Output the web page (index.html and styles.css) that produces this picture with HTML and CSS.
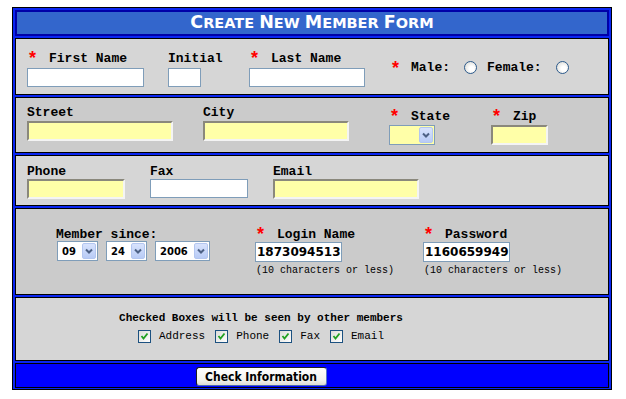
FILE: index.html
```html
<!DOCTYPE html>
<html lang="en">
<head>
  <meta charset="UTF-8">
  <title>Create New Member Form</title>
  <link rel="stylesheet" href="styles.css">
</head>
<body>
  <form class="member-form">
    <div class="title">
      <span class="cap">C</span>REATE <span class="cap">N</span>EW <span class="cap">M</span>EMBER <span class="cap">F</span>ORM
    </div>

    <!-- name -->
    <div class="row light name-row">
      <div class="field col-first">
        <label><span class="req">*</span>First Name</label>
        <input type="text" class="plain w-first">
      </div>
      <div class="field col-initial">
        <label>Initial</label>
        <input type="text" class="plain w-initial">
      </div>
      <div class="field col-last">
        <label><span class="req">*</span>Last Name</label>
        <input type="text" class="plain w-last">
      </div>
      <div class="gender">
        <span class="req">*</span><span>Male:</span>
        <span class="radio first-radio"></span>
        <span>Female:</span>
        <span class="radio"></span>
      </div>
    </div>

    <!-- address -->
    <div class="row dark address-row">
      <div class="field col-street">
        <label>Street</label>
        <input type="text" class="fill w-street">
      </div>
      <div class="field col-city">
        <label>City</label>
        <input type="text" class="fill w-street">
      </div>
      <div class="field col-state low">
        <label><span class="req">*</span>State</label>
        <span class="select yellow w-state">
          <select><option></option></select>
          <span class="arrow"><svg width="10" height="8" viewBox="0 0 10 8"><path d="M2 2.5 L5 5.5 L8 2.5" fill="none" stroke="#4d6185" stroke-width="2"/></svg></span>
        </span>
      </div>
      <div class="field low">
        <label><span class="req">*</span>Zip</label>
        <input type="text" class="fill w-zip">
      </div>
    </div>

    <!-- contact -->
    <div class="row light contact-row">
      <div class="field col-phone">
        <label>Phone</label>
        <input type="text" class="fill w-phone">
      </div>
      <div class="field col-fax">
        <label>Fax</label>
        <input type="text" class="plain w-fax">
      </div>
      <div class="field">
        <label>Email</label>
        <input type="text" class="fill w-street">
      </div>
    </div>

    <!-- login -->
    <div class="row dark login-row">
      <div class="field col-since">
        <label>Member since:</label>
        <div class="dates">
          <span class="select w-month">
            <select><option>09</option></select>
            <span class="arrow"><svg width="10" height="8" viewBox="0 0 10 8"><path d="M2 2.5 L5 5.5 L8 2.5" fill="none" stroke="#4d6185" stroke-width="2"/></svg></span>
          </span>
          <span class="select w-month">
            <select><option>24</option></select>
            <span class="arrow"><svg width="10" height="8" viewBox="0 0 10 8"><path d="M2 2.5 L5 5.5 L8 2.5" fill="none" stroke="#4d6185" stroke-width="2"/></svg></span>
          </span>
          <span class="select w-year">
            <select><option>2006</option></select>
            <span class="arrow"><svg width="10" height="8" viewBox="0 0 10 8"><path d="M2 2.5 L5 5.5 L8 2.5" fill="none" stroke="#4d6185" stroke-width="2"/></svg></span>
          </span>
        </div>
      </div>
      <div class="field col-login">
        <label><span class="req">*</span>Login Name</label>
        <input type="text" class="plain w-login" value="1873094513">
        <span class="hint">(10 characters or less)</span>
      </div>
      <div class="field">
        <label><span class="req">*</span>Password</label>
        <input type="text" class="plain w-login" value="1160659949">
        <span class="hint">(10 characters or less)</span>
      </div>
    </div>

    <!-- privacy -->
    <div class="row light share-row">
      <p class="share-title">Checked Boxes will be seen by other members</p>
      <div class="checks">
        <span class="box"><svg width="11" height="11" viewBox="0 0 11 11"><path d="M2.5 5 L4.5 7.5 L8.5 2.5" fill="none" stroke="#21a121" stroke-width="1.8"/></svg></span><span class="check-label">Address</span>
        <span class="box"><svg width="11" height="11" viewBox="0 0 11 11"><path d="M2.5 5 L4.5 7.5 L8.5 2.5" fill="none" stroke="#21a121" stroke-width="1.8"/></svg></span><span class="check-label">Phone</span>
        <span class="box"><svg width="11" height="11" viewBox="0 0 11 11"><path d="M2.5 5 L4.5 7.5 L8.5 2.5" fill="none" stroke="#21a121" stroke-width="1.8"/></svg></span><span class="check-label">Fax</span>
        <span class="box"><svg width="11" height="11" viewBox="0 0 11 11"><path d="M2.5 5 L4.5 7.5 L8.5 2.5" fill="none" stroke="#21a121" stroke-width="1.8"/></svg></span><span class="check-label">Email</span>
      </div>
    </div>

    <div class="row submit-row">
      <button type="button" class="check-btn">Check Information</button>
    </div>
  </form>
</body>
</html>
```

FILE: styles.css
```css
* {
  box-sizing: border-box;
}

body {
  margin: 7px 0 0 12px;
  background: #fff;
  font-family: "Liberation Mono", monospace;
}

.member-form {
  width: 600px;
  border: 1px solid #000;
  background: #0a26f2;
  padding: 2px 2px 1px;
  display: flex;
  flex-direction: column;
  gap: 2px;
}

.title {
  height: 26px;
  border: 2px solid #0000a8;
  background: #3366cc;
  color: #fff;
  font: bold 14.5px/21px "DejaVu Sans", sans-serif;
  text-align: center;
}

.title .cap {
  font-size: 17.5px;
}

.row {
  border: 1px solid #000;
  display: flex;
  padding-left: 11px;
}

.light {
  background: #d6d6d6;
}

.dark {
  background: #cbcbcb;
}

.field {
  display: flex;
  flex-direction: column;
  align-items: flex-start;
}

.field label {
  display: block;
  font: bold 13px/15px "Liberation Mono", monospace;
  color: #000;
  white-space: nowrap;
}

.req {
  color: #f00;
  font: bold 18px "Liberation Sans", sans-serif;
  line-height: 0;
  margin: 0 13px 0 2px;
  vertical-align: -2px;
}

/* inputs */
.plain {
  height: 19px;
  border: 1px solid #7f9db9;
  background: #fff;
  padding: 0 0 0 1px;
  font: bold 12px "DejaVu Sans", sans-serif;
  color: #000;
}

.fill {
  height: 20px;
  border: 2px solid;
  border-color: #8a887c #f4f4f4 #f4f4f4 #8a887c;
  background: #ffffa8;
}

.select {
  display: inline-flex;
  height: 20px;
  border: 1px solid #7f9db9;
  background: #fff;
}

.select.yellow {
  background: #ffffa8;
}

.select select {
  appearance: none;
  -webkit-appearance: none;
  flex: 1;
  min-width: 0;
  border: 0;
  background: transparent;
  padding: 0 0 0 4px;
  font: bold 10px "DejaVu Sans", sans-serif;
  color: #000;
}

.arrow {
  width: 14px;
  margin: 1px 1px 1px 0;
  border: 1px solid #b3c6f0;
  border-radius: 2px;
  background: linear-gradient(#d8e3fd, #b8cbf6);
  display: flex;
  align-items: center;
  justify-content: center;
}

.w-first { width: 117px; }
.w-initial { width: 33px; }
.w-last { width: 116px; }
.w-street { width: 146px; }
.w-state { width: 46px; }
.w-zip { width: 57px; }
.w-phone { width: 98px; }
.w-fax { width: 98px; }
.w-login { width: 87px; height: 20px; }
.w-month { width: 41px; }
.w-year { width: 55px; }

/* name row */
.name-row {
  height: 57px;
  align-items: flex-end;
  padding-bottom: 7px;
}

.name-row label {
  margin-bottom: 2px;
}

.col-first { width: 141px; }
.col-initial { width: 81px; }
.col-last { width: 141px; }

.gender {
  display: flex;
  align-items: center;
  margin-bottom: 12px;
  font: bold 13px/15px "Liberation Mono", monospace;
}

.gender .req {
  margin-right: 12px;
}

.radio {
  width: 13px;
  height: 13px;
  border: 1px solid #2c5a8c;
  border-radius: 50%;
  background: radial-gradient(circle at 60% 60%, #fff 25%, #d2d2cc 100%);
  margin: 0 10px 0 14px;
}

/* address row */
.address-row {
  height: 56px;
  align-items: flex-start;
  padding-top: 7px;
}

.address-row label {
  margin-bottom: 1px;
}

.col-street { width: 176px; }
.col-city { width: 186px; }
.col-state { width: 102px; }

.low {
  margin-top: 4px;
}

/* contact row */
.contact-row {
  height: 51px;
  align-items: flex-start;
  padding-top: 8px;
}

.col-phone { width: 123px; }
.col-fax { width: 123px; }

/* login row */
.login-row {
  height: 87px;
  align-items: flex-start;
  padding-top: 18px;
  padding-left: 40px;
}

.col-since { width: 199px; }
.col-login { width: 168px; }

.dates {
  display: flex;
  gap: 8px;
  margin: -1px 0 0 1px;
}

.hint {
  margin: 3px 0 0 1px;
  font: 10px/12px "Liberation Mono", monospace;
  white-space: nowrap;
}

/* privacy row */
.share-row {
  height: 64px;
  flex-direction: column;
  align-items: center;
  padding: 13px 102px 0 0;
}

.share-title {
  margin: 0;
  font: bold 11px/14px "Liberation Mono", monospace;
}

.checks {
  display: flex;
  align-items: center;
  margin-top: 4px;
  font: 11px/14px "Liberation Mono", monospace;
}

.box {
  width: 13px;
  height: 13px;
  border: 1px solid #1c5180;
  background: linear-gradient(135deg, #dcdcd7, #fff);
  display: flex;
  align-items: center;
  justify-content: center;
  margin-right: 8px;
}

.check-label {
  margin-right: 10px;
}

.check-label:last-child {
  margin-right: 0;
}

/* submit row */
.submit-row {
  height: 25px;
  background: #0000ff;
  justify-content: center;
  padding: 3px 102px 0 0;
}

.check-btn {
  width: 131px;
  height: 19px;
  border: 1px solid #1f1f1f;
  border-right-color: #5a78c8;
  border-bottom-color: #4a68b8;
  border-radius: 3px;
  background: linear-gradient(#ffffff, #f3f3ee 70%, #dedcd2);
  font: bold 12px "Liberation Sans Narrow", "DejaVu Sans Condensed", "Liberation Sans", sans-serif;
  color: #000;
  padding: 0;
}
```
